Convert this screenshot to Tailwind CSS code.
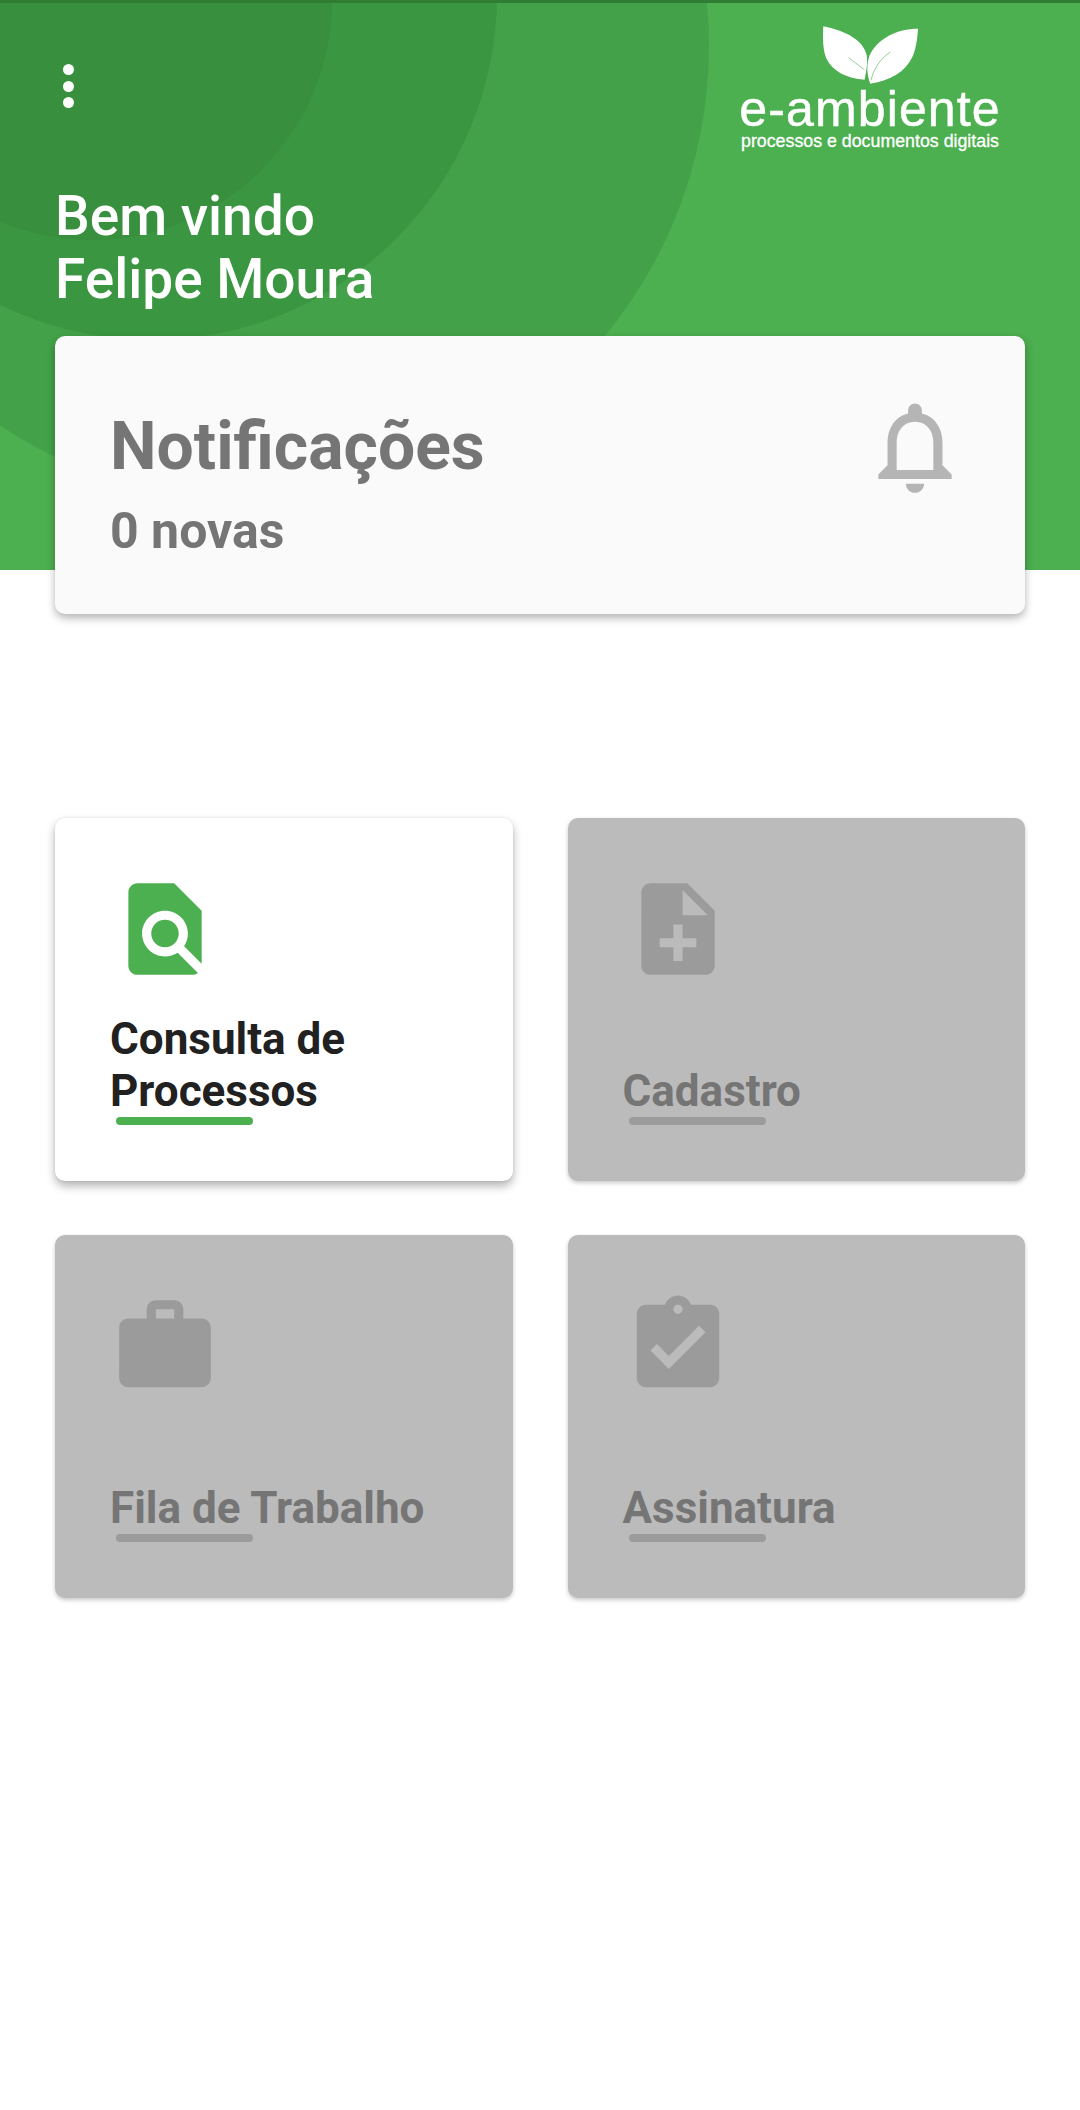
<!DOCTYPE html>
<html lang="pt-BR">
<head>
  <meta charset="UTF-8" />
  <meta name="viewport" content="width=device-width, initial-scale=1" />
  <title>e-ambiente</title>
  <script src="https://cdn.jsdelivr.net/npm/@tailwindcss/browser@4"></script>
</head>
<body class="bg-white font-['Roboto',sans-serif]">
  <div class="w-[1080px] h-[2110px] overflow-hidden">
    <!-- Cabeçalho -->
    <header class="relative h-[570px] overflow-hidden bg-[#4caf50]">
      <div class="absolute left-[-203px] top-[-410px] w-[912px] h-[912px] rounded-full bg-[#43a249]"></div>
      <div class="absolute left-[-193px] top-[-350px] w-[690px] h-[690px] rounded-full bg-[#3b9641]"></div>
      <div class="absolute left-[-148px] top-[-240px] w-[480px] h-[480px] rounded-full bg-[#388f3d]"></div>
      <div class="relative h-[3px] bg-[#2e7d32]"></div>

      <div class="relative pl-[55px] pr-[81px]">
        <div class="flex justify-between h-[182px]">
          <div class="flex flex-col gap-[5.5px] ml-[7.5px] mt-[61px]">
            <span class="block w-[11px] h-[11px] rounded-full bg-white"></span>
            <span class="block w-[11px] h-[11px] rounded-full bg-white"></span>
            <span class="block w-[11px] h-[11px] rounded-full bg-white"></span>
          </div>
          <!-- Logo -->
          <div class="flex flex-col items-center w-[258px] pt-[23px] text-white font-['Liberation_Sans',sans-serif]">
            <svg class="w-[95px] h-[58px]" viewBox="368 78 285 172">
              <path fill="#fff" d="M369 78C440 92 490 122 499 165C503 190 497 215 493 238C440 235 395 212 377 172C367 145 367 110 369 78Z" />
              <path fill="#fff" d="M653 85C590 85 530 115 508 165C497 195 500 225 510 250C570 240 615 215 636 170C647 145 651 115 653 85Z" />
              <path fill="none" stroke="#4caf50" stroke-opacity="0.6" stroke-width="3" d="M445 172L492 208" />
              <path fill="none" stroke="#4caf50" stroke-opacity="0.6" stroke-width="3" d="M570 155C540 175 520 205 512 240" />
            </svg>
            <div class="text-[50px] leading-[50px] tracking-[1.15px] whitespace-nowrap [-webkit-text-stroke:0.5px_white]">e-ambiente</div>
            <div class="text-[17.8px] leading-[20px] mt-[-3px] whitespace-nowrap [-webkit-text-stroke:0.3px_white]">processos e documentos digitais</div>
          </div>
        </div>
        <h1 class="text-[55px] leading-[63px] font-medium text-white">Bem vindo<br>Felipe Moura</h1>
      </div>
    </header>

    <main class="relative px-[55px] mt-[-234px]">
      <!-- Notificações -->
      <section class="flex justify-between h-[278px] pl-[55px] pr-[55px] pt-[56px] rounded-[10px] bg-[#fafafa] shadow-[0_4px_8px_rgba(0,0,0,0.3)]">
        <div class="pt-[22px]">
          <h2 class="text-[66px] leading-[66px] font-bold text-[#757575]">Notificações</h2>
          <p class="mt-[23px] text-[50px] leading-[56px] font-bold text-[#757575]">0 novas</p>
        </div>
        <svg class="w-[110px] h-[110px] fill-[#b5b5b5]" viewBox="0 0 24 24">
          <path d="M12 22c1.1 0 2-.9 2-2h-4c0 1.1.9 2 2 2zm6-6v-5c0-3.07-1.63-5.64-4.5-6.32V4c0-.83-.67-1.5-1.5-1.5s-1.5.67-1.5 1.5v.68C7.64 5.36 6 7.92 6 11v5l-2 2v1h16v-1l-2-2zm-2 1H8v-6c0-2.48 1.51-4.5 4-4.5s4 2.02 4 4.5v6z" />
        </svg>
      </section>

      <!-- Menu -->
      <section class="grid grid-cols-2 gap-x-[55px] gap-y-[54px] mt-[204px]">
        <a class="flex flex-col justify-between h-[363px] pl-[55px] pt-[56px] pb-[56px] rounded-[10px] bg-white shadow-[0_5px_10px_rgba(0,0,0,0.3),0_0_3px_rgba(0,0,0,0.08)]">
          <svg class="w-[110px] h-[110px] fill-[#4caf50]" viewBox="0 0 24 24">
            <path d="M20 19.59V8l-6-6H6c-1.1 0-1.99.9-1.99 2L4 20c0 1.1.89 2 1.99 2H18c.45 0 .85-.15 1.19-.4l-4.43-4.43c-.8.52-1.74.83-2.76.83-2.76 0-5-2.24-5-5s2.24-5 5-5 5 2.24 5 5c0 1.02-.31 1.96-.83 2.75L20 19.59zM9 13c0 1.66 1.34 3 3 3s3-1.34 3-3-1.34-3-3-3-3 1.34-3 3z" />
          </svg>
          <div>
            <h3 class="text-[44px] leading-[52px] font-bold text-[#212121]">Consulta de<br>Processos</h3>
            <div class="ml-[6px] w-[137px] h-[8px] rounded-full bg-[#4caf50]"></div>
          </div>
        </a>

        <a class="flex flex-col justify-between h-[363px] pl-[55px] pt-[56px] pb-[56px] rounded-[10px] bg-[#bbbbbb] shadow-[0_2px_4px_rgba(0,0,0,0.22)]">
          <svg class="w-[110px] h-[110px] fill-[#9b9b9b]" viewBox="0 0 24 24">
            <path d="M14 2H6c-1.1 0-1.99.9-1.99 2L4 20c0 1.1.89 2 1.99 2H18c1.1 0 2-.9 2-2V8l-6-6zm2 14h-3v3h-2v-3H8v-2h3v-3h2v3h3v2zm-3-7V3.5L18.5 9H13z" />
          </svg>
          <div>
            <h3 class="text-[44px] leading-[52px] font-bold text-[#757575]">Cadastro</h3>
            <div class="ml-[6px] w-[137px] h-[8px] rounded-full bg-[#9b9b9b]"></div>
          </div>
        </a>

        <a class="flex flex-col justify-between h-[363px] pl-[55px] pt-[56px] pb-[56px] rounded-[10px] bg-[#bbbbbb] shadow-[0_2px_4px_rgba(0,0,0,0.22)]">
          <svg class="w-[110px] h-[110px] fill-[#9b9b9b]" viewBox="0 0 24 24">
            <path d="M20 6h-4V4c0-1.11-.89-2-2-2h-4c-1.11 0-2 .89-2 2v2H4c-1.11 0-1.99.89-1.99 2L2 19c0 1.11.89 2 2 2h16c1.11 0 2-.89 2-2V8c0-1.11-.89-2-2-2zm-6 0h-4V4h4v2z" />
          </svg>
          <div>
            <h3 class="text-[44px] leading-[52px] font-bold text-[#757575]">Fila de Trabalho</h3>
            <div class="ml-[6px] w-[137px] h-[8px] rounded-full bg-[#9b9b9b]"></div>
          </div>
        </a>

        <a class="flex flex-col justify-between h-[363px] pl-[55px] pt-[56px] pb-[56px] rounded-[10px] bg-[#bbbbbb] shadow-[0_2px_4px_rgba(0,0,0,0.22)]">
          <svg class="w-[110px] h-[110px] fill-[#9b9b9b]" viewBox="0 0 24 24">
            <path d="M19 3h-4.18C14.4 1.84 13.3 1 12 1c-1.3 0-2.4.84-2.82 2H5c-1.1 0-2 .9-2 2v14c0 1.1.9 2 2 2h14c1.1 0 2-.9 2-2V5c0-1.1-.9-2-2-2zm-7 0c.55 0 1 .45 1 1s-.45 1-1 1-1-.45-1-1 .45-1 1-1zm-2 14l-4-4 1.41-1.41L10 14.17l6.59-6.59L18 9l-8 8z" />
          </svg>
          <div>
            <h3 class="text-[44px] leading-[52px] font-bold text-[#757575]">Assinatura</h3>
            <div class="ml-[6px] w-[137px] h-[8px] rounded-full bg-[#9b9b9b]"></div>
          </div>
        </a>
      </section>
    </main>
  </div>
</body>
</html>
